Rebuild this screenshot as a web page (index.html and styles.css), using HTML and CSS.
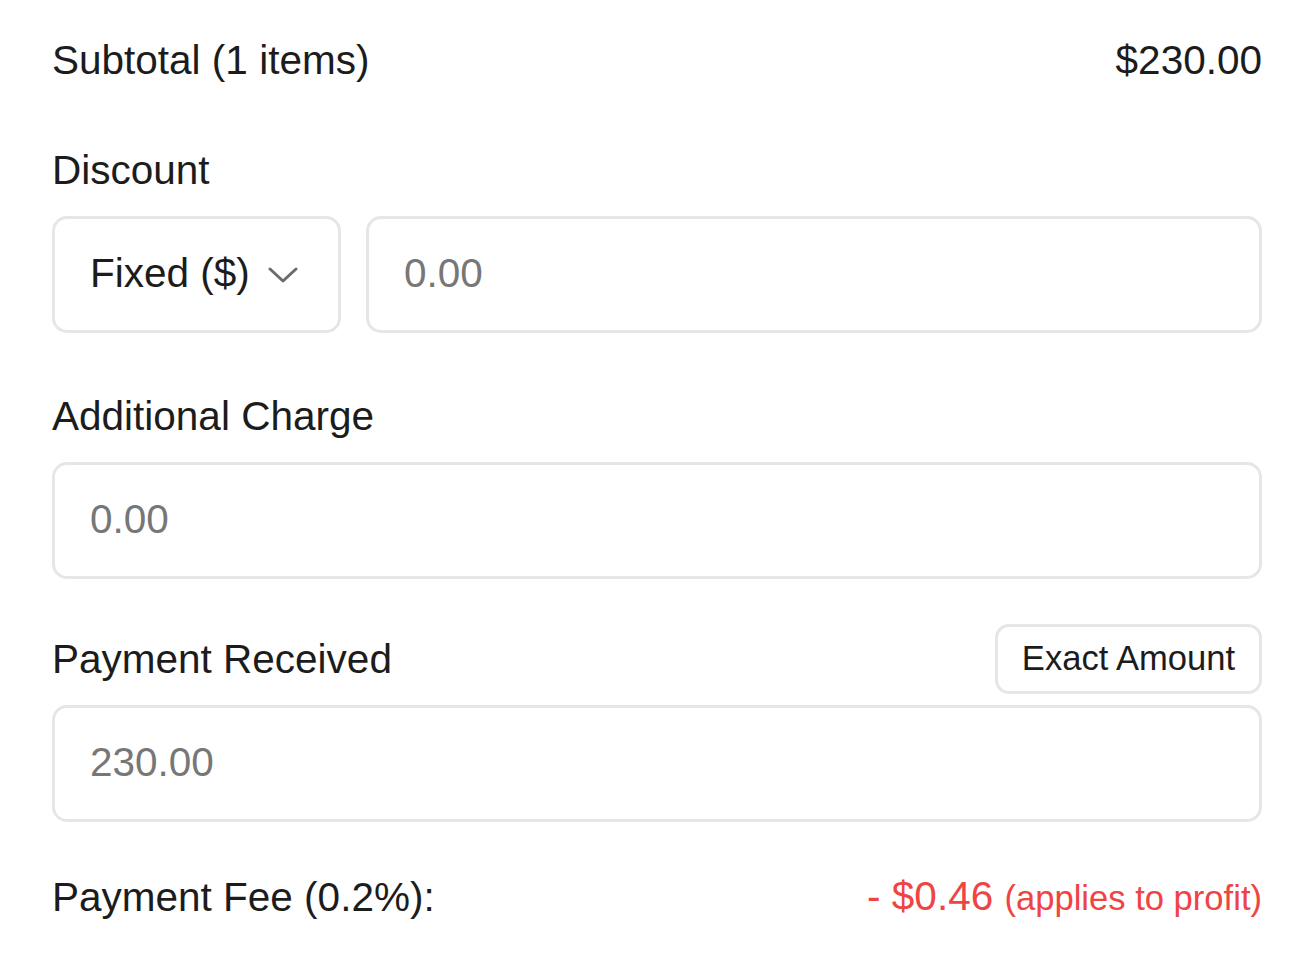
FILE: index.html
```html
<!DOCTYPE html>
<html lang="en">
<head>
<meta charset="utf-8">
<title>Checkout Summary</title>
<link rel="stylesheet" href="styles.css">
</head>
<body>
<div class="panel">
  <div class="row subtotal">
    <span>Subtotal (1 items)</span>
    <span>$230.00</span>
  </div>

  <div class="label discount-label">Discount</div>
  <div class="discount-fields">
    <div class="select">
      <span>Fixed ($)</span>
      <svg class="chevron" width="30" height="16" viewBox="0 0 30 16" aria-hidden="true">
        <path d="M2 2 L15 14 L28 2" fill="none" stroke="#6b6b6b" stroke-width="3" stroke-linecap="round" stroke-linejoin="round"/>
      </svg>
    </div>
    <div class="input grow"><span class="placeholder">0.00</span></div>
  </div>

  <div class="label charge-label">Additional Charge</div>
  <div class="input"><span class="placeholder">0.00</span></div>

  <div class="row payment-row">
    <span>Payment Received</span>
    <button class="exact">Exact Amount</button>
  </div>
  <div class="input"><span class="placeholder">230.00</span></div>

  <div class="row fee-row">
    <span>Payment Fee (0.2%):</span>
    <span class="fee"><span class="fee-amount">- $0.46</span> <span class="fee-note">(applies to profit)</span></span>
  </div>
</div>
</body>
</html>
```

FILE: styles.css
```css
html, body {
  margin: 0;
  padding: 0;
  background: #ffffff;
}

body {
  font-family: "Liberation Sans", Arial, sans-serif;
  color: #1c1c1c;
  font-size: 40.5px;
  line-height: 46px;
}

.panel {
  padding: 37px 38px 40px 52px;
  display: flex;
  flex-direction: column;
}

.row {
  display: flex;
  justify-content: space-between;
  align-items: center;
}

.subtotal {
  height: 46px;
}

.label {
  height: 46px;
}

.discount-label {
  margin-top: 64px;
  margin-bottom: 23px;
}

.discount-fields {
  display: flex;
  gap: 25px;
}

.select,
.input {
  box-sizing: border-box;
  height: 117px;
  border: 3px solid #e6e6e6;
  border-radius: 15px;
  display: flex;
  align-items: center;
  padding: 0 35px 3px;
}

.select {
  width: 289px;
  flex: none;
  gap: 18px;
  color: #1c1c1c;
}

.chevron {
  display: block;
  margin-top: 4px;
}

.grow {
  flex: 1;
}

.placeholder {
  color: #777777;
}

.charge-label {
  margin-top: 60px;
  margin-bottom: 23px;
}

.payment-row {
  margin-top: 45px;
  margin-bottom: 11px;
  height: 70px;
}

.exact {
  box-sizing: border-box;
  height: 70px;
  width: 267px;
  border: 3px solid #e6e6e6;
  border-radius: 14px;
  background: #ffffff;
  font-family: "Liberation Sans", Arial, sans-serif;
  font-size: 34.6px;
  color: #1c1c1c;
  padding: 0 0 2px;
  text-align: center;
}

.fee-row {
  margin-top: 52px;
  height: 46px;
}

.fee {
  color: #ef4444;
  white-space: nowrap;
}

.fee-note {
  font-size: 34.6px;
}
```
